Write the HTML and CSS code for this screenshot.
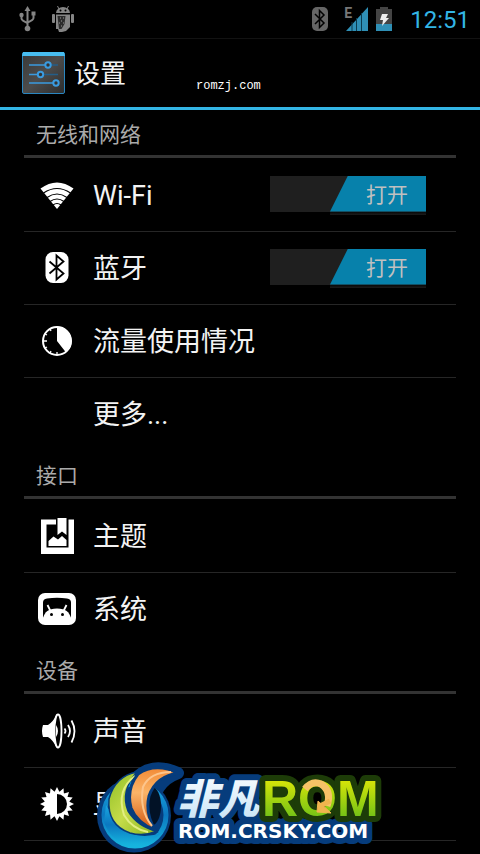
FILE: index.html
```html
<!DOCTYPE html>
<html lang="zh-CN">
<head>
  <meta charset="UTF-8">
  <meta name="viewport" content="width=device-width, initial-scale=1.0">
  <title>设置</title>
  <link rel="stylesheet" href="styles.css">
</head>
<body>
  <header class="status-bar">
    <svg class="status-icon" width="18" height="26" viewBox="0 0 18 26" fill="none" stroke="#858585" stroke-width="2">
      <path d="M8.500 22V4M2.500 9v3.500q0 2 6 4.500M14.500 8v4q0 2-6 4.500"/>
      <path d="M8.500 0l3 5h-6z" fill="#858585" stroke="none"/>
      <circle cx="8.500" cy="22.500" r="2.800" fill="#858585" stroke="none"/>
      <circle cx="2.500" cy="9" r="2.200" fill="#858585" stroke="none"/>
      <path d="M12.500 5.500h4v4h-4z" fill="#858585" stroke="none"/>
    </svg>
    <svg class="status-icon android-icon" width="24" height="28" viewBox="0 0 24 28" fill="#858585">
      <path d="M5 8a7 6 0 0 1 14 0z"/>
      <path d="M8 4L6.500 1M16 4l1.500-3" stroke="#858585" stroke-width="1"/>
      <rect x="1" y="9" width="3" height="9" rx="1"/>
      <rect x="20" y="9" width="3" height="9" rx="1"/>
      <path d="M5 9.500h14V22l-4 4-4 1H8l-1-3H5z"/>
      <path d="M6.500 11h8l-1 8-3 5H8z" fill="#2c2c2c"/>
      <path d="M9 13h1m2 0h1m-3 3h1m-3 2h1m3 0h1m-3 3h1" stroke="#999" stroke-width="1"/>
      <circle cx="9.500" cy="5.500" r="1" fill="#000"/>
      <circle cx="14.500" cy="5.500" r="1" fill="#000"/>
    </svg>
    <svg class="status-icon status-right" width="16" height="24" viewBox="0 0 16 24">
      <rect width="16" height="24" rx="5" fill="#666"/>
      <path d="M3 7l9 9-4.500 4.500v-17L12 8l-9 9" fill="none" stroke="#000" stroke-width="1.500"/>
    </svg>
    <span class="network">E</span>
    <svg class="status-icon" width="22" height="24" viewBox="0 0 22 24">
      <path d="M0 24L22 0v24z" fill="#2f8fb5"/>
      <path d="M6 15v9M10.500 11v13M15.500 6v18" stroke="#0b3a4d" stroke-width="1"/>
    </svg>
    <svg class="status-icon battery" width="16" height="24" viewBox="0 0 16 24">
      <path d="M0 2h4V0h8v2h4v22H0z" fill="#444"/>
      <path d="M0 17h16v7H0z" fill="#2f8fb5"/>
      <path d="M6 7h6l-2 4h3L6 19l1-6H4z" fill="#eee"/>
    </svg>
    <time class="clock">12:51</time>
  </header>

  <div class="action-bar">
    <svg width="43" height="42" viewBox="0 0 43 42">
      <defs>
        <linearGradient id="tile" x1="0" y1="0" x2="1" y2="1">
          <stop offset="0" stop-color="#383838"/>
          <stop offset=".5" stop-color="#4c4c4c"/>
          <stop offset="1" stop-color="#2c2c2c"/>
        </linearGradient>
      </defs>
      <rect x=".5" y=".5" width="42" height="41" rx="1.500" fill="url(#tile)" stroke="#2a86c0"/>
      <path d="M1 0h41l1 4H0z" fill="#48bdf0"/>
      <path d="M7 13h16M7 22.500h9M7 31h24" stroke="#3a9be0" stroke-width="1.500"/>
      <path d="M29 13h7M22 22.500h14" stroke="#245e88" stroke-width="1.500"/>
      <g fill="#333" stroke="#3a9be0" stroke-width="2">
        <circle cx="26" cy="13" r="2.700"/>
        <circle cx="18.500" cy="22.500" r="2.700"/>
        <circle cx="34" cy="31" r="2.700"/>
      </g>
    </svg>
    <h1>设置</h1>
    <span class="site-mark">romzj.com</span>
  </div>

  <main class="settings">
    <section>
      <h2>无线和网络</h2>
      <ul>
        <li class="row">
          <svg class="icon" viewBox="0 0 40 40">
            <path d="M20 34L3.500 13.500Q20 1.500 36.500 13.500z" fill="#fff"/>
            <g fill="none" stroke="#000" stroke-width="1.200">
              <path d="M6.500 18Q20 9 33.500 18M10 22.500Q20 15.500 30 22.500M13 26.500Q20 21.500 27 26.500M16 30Q20 27 24 30"/>
            </g>
          </svg>
          <a class="title" href="#wifi">Wi-Fi</a>
          <label class="switch">
            <input type="checkbox" role="switch" aria-label="Wi-Fi" checked>
            <span>打开</span>
          </label>
        </li>
        <li class="row">
          <svg class="icon" viewBox="0 0 40 40">
            <rect x="8.500" y="4" width="23" height="31" rx="7.500" fill="#fff"/>
            <path d="M12.500 13.500l14 12-7 6v-24l7 6-14 12" fill="none" stroke="#000" stroke-width="1.800"/>
          </svg>
          <a class="title" href="#bluetooth">蓝牙</a>
          <label class="switch">
            <input type="checkbox" role="switch" aria-label="蓝牙" checked>
            <span>打开</span>
          </label>
        </li>
        <li class="row">
          <svg class="icon" viewBox="0 0 40 40">
            <circle cx="20" cy="20" r="14" fill="none" stroke="#fff" stroke-width="2"/>
            <path d="M20 20V5.500a14.500 14.500 0 0 1 9 26z" fill="#fff"/>
            <path d="M6 20h4M20 34v-3M13 8l1 2M8 13l2 1M8 27l2-1M13 32l1-2" stroke="#fff" stroke-width="1.300"/>
          </svg>
          <a class="title" href="#data">流量使用情况</a>
        </li>
        <li class="row">
          <span class="icon"></span>
          <a class="title" href="#more">更多...</a>
        </li>
      </ul>
    </section>

    <section>
      <h2>接口</h2>
      <ul>
        <li class="row">
          <svg class="icon" viewBox="0 0 40 40" fill="#fff">
            <path d="M4 3.500h15v5H9.500v23h22v-28H37V38H4z"/>
            <path d="M20.500 2h9v17L25 15.500 20.500 19z"/>
            <path d="M11.500 30v-5l5-4.500 4.500 3 4-3.500 4.500 4V30z"/>
          </svg>
          <a class="title" href="#theme">主题</a>
        </li>
        <li class="row">
          <svg class="icon" viewBox="0 0 40 40">
            <rect x="1" y="4" width="38" height="32" rx="7" fill="#fff"/>
            <path d="M10 9.500q10-1.500 20 0 4 .5 4 4v15H6v-15q0-3.500 4-4z" fill="#000"/>
            <path d="M6 29c2-6 5-9.500 14-9.500s12 3.500 14 9.500v2H6z" fill="#fff"/>
            <path d="M13.500 22l-3-6M26.500 22l3-6" stroke="#fff" stroke-width="1.800"/>
            <circle cx="14.500" cy="25.500" r="1.500"/>
            <circle cx="25.500" cy="25.500" r="1.500"/>
          </svg>
          <a class="title" href="#system">系统</a>
        </li>
      </ul>
    </section>

    <section>
      <h2>设备</h2>
      <ul>
        <li class="row">
          <svg class="icon" viewBox="0 0 40 40">
            <path d="M6 14h5q5-3 9-11v34q-4-8-9-11H6q-2-6 0-12z" fill="#fff"/>
            <ellipse cx="21" cy="20" rx="3.500" ry="16.500" fill="#000" stroke="#fff" stroke-width="1.800"/>
            <path d="M19 14q4 6 0 12z" fill="#fff"/>
            <path d="M27.500 17.500q2 2.500 0 5M31 14q4 6 0 12M34.500 9.500q6 10.500 0 22" fill="none" stroke="#fff" stroke-width="1.800"/>
          </svg>
          <a class="title" href="#sound">声音</a>
        </li>
        <li class="row">
          <svg class="icon" viewBox="0 0 40 40">
            <g fill="#fff">
              <path id="rays" d="M20 3l3 6h-6zM20 37l3-6h-6zM3 20l6 3v-6zM37 20l-6 3v-6zM8 8l6.500 2-4.500 4.500zM32 8l-2 6.500-4.500-4.500zM8 32l2-6.500 4.500 4.500zM32 32l-6.500-2 4.500-4.500z"/>
              <use href="#rays" transform="rotate(22.500 20 20)"/>
              <circle cx="20" cy="20" r="12.500"/>
            </g>
            <path d="M20 10a10 10 0 0 1 0 20z"/>
          </svg>
          <a class="title" href="#display">显示</a>
        </li>
      </ul>
    </section>
  </main>

  <svg class="logo" viewBox="90 756 300 98" role="img" aria-label="非凡ROM">
    <defs>
      <linearGradient id="green" x1="0" y1="0" x2="1" y2="1">
        <stop offset="0" stop-color="#8fbf25"/>
        <stop offset=".5" stop-color="#c6dc4a"/>
        <stop offset="1" stop-color="#86b41c"/>
      </linearGradient>
      <linearGradient id="orange" x1="0" y1="0" x2="0" y2="1">
        <stop offset="0" stop-color="#f28a35"/>
        <stop offset=".4" stop-color="#fbb468"/>
        <stop offset="1" stop-color="#d2560f"/>
      </linearGradient>
      <linearGradient id="cyan" x1="0" y1="0" x2="0" y2="1">
        <stop offset="0" stop-color="#19a6e0"/>
        <stop offset=".5" stop-color="#0b78c0"/>
        <stop offset="1" stop-color="#16b4de"/>
      </linearGradient>
      <linearGradient id="lime" x1="0" y1="0" x2="0" y2="1">
        <stop offset="0" stop-color="#f0ee05"/>
        <stop offset="1" stop-color="#58b81a"/>
      </linearGradient>
      <linearGradient id="ice" x1="0" y1="0" x2="0" y2="1">
        <stop offset="0" stop-color="#fff"/>
        <stop offset="1" stop-color="#c3e2f6"/>
      </linearGradient>
    </defs>
    <circle cx="134" cy="815.500" r="37" fill="#063c7c"/>
    <path d="M178 773Q153 762 137 777T130 805L155 829Q145 785 178 773z" fill="#063c7c" stroke="#063c7c" stroke-width="12" stroke-linejoin="round"/>
    <circle cx="135" cy="815" r="31" fill="none" stroke="url(#cyan)" stroke-width="5"/>
    <path d="M104 822Q113 849 144 844Q155 841 161 833Q136 842 119 825L106 805z" fill="url(#cyan)"/>
    <ellipse cx="152" cy="806" rx="9" ry="19" fill="#021226"/>
    <path d="M137 772Q115 776 109 799Q107 825 130 833Q144 837 157 831Q138 827 128 811Q120 791 137 772z" fill="url(#green)" stroke="#063c7c" stroke-width="1.500"/>
    <path d="M135 776Q116 790 124 815Q132 829 148 832" fill="none" stroke="#e2ee82" stroke-width="2"/>
    <path d="M179 773Q155 762 138 774Q126 789 131 808Q137 823 155 830Q145 813 149 796Q156 776 179 773z" fill="url(#orange)" stroke="#063c7c" stroke-width="3"/>
    <path d="M171 772Q150 772 143 787Q139 810 152 826" fill="none" stroke="#fdc58c" stroke-width="2"/>
    <text class="logo-cn" x="177" y="814">非凡</text>
    <text class="logo-url" x="178" y="838">ROM.CRSKY.COM</text>
    <text class="logo-rom" x="262" y="816">ROM</text>
    <path d="M305 789Q312 780 321 784Q332 791 327 806" fill="none" stroke="#f7c266" stroke-width="7"/>
    <path d="M318 801l13 12-14-1z" fill="#f0b44e" stroke="#f0b44e" stroke-width="1"/>
    <path d="M320 806l10-5" stroke="#f0b44e" stroke-width="5"/>
  </svg>
</body>
</html>
```

FILE: styles.css
```css
* {
  box-sizing: border-box;
}

body {
  position: relative;
  margin: 0;
  min-height: 100vh;
  background: #000;
  color: #f3f3f3;
  font-family: Roboto, "Noto Sans CJK SC", sans-serif;
}

h1, h2, ul {
  margin: 0;
  padding: 0;
  font-weight: 400;
}

a {
  color: inherit;
  text-decoration: none;
}

/* status bar */
.status-bar {
  display: flex;
  align-items: center;
  height: 39px;
  padding: 0 10px 0 19px;
  border-bottom: 1px solid #121212;
}

.status-icon {
  flex: none;
}

.android-icon {
  margin-left: 14px;
}

.status-right {
  margin-left: auto;
}

.network {
  align-self: flex-start;
  margin: 6px -6px 0 16px;
  color: #777;
  font-size: 14px;
  font-weight: 700;
  line-height: 14px;
}

.battery {
  margin-left: 8px;
}

.clock {
  margin-left: 18px;
  padding-top: 2px;
  color: #33b5e5;
  font-size: 24px;
  line-height: 36px;
}

/* action bar */
.action-bar {
  position: relative;
  display: flex;
  align-items: center;
  gap: 9px;
  height: 71px;
  padding-left: 22px;
  border-bottom: 3px solid #33b5e5;
}

h1 {
  padding-top: 2px;
  font-size: 26px;
  line-height: 36px;
}

.site-mark {
  position: absolute;
  left: 196px;
  bottom: 13px;
  color: #fff;
  font: 12px/16px "Liberation Mono", monospace;
}

/* list */
.settings {
  padding: 0 24px;
}

h2 {
  height: 48px;
  margin-bottom: 1px;
  padding-left: 12px;
  border-bottom: 3px solid #333;
  color: #aaa;
  font-size: 21px;
  line-height: 50px;
}

.row {
  display: flex;
  align-items: center;
  height: 73px;
  padding: 0 30px 0 13px;
  border-bottom: 1px solid #262626;
}

section:not(:last-child) .row:last-child {
  border-bottom-color: transparent;
}

.icon {
  flex: none;
  width: 40px;
  height: 40px;
  margin-right: 16px;
}

.title {
  flex: 1;
  padding-top: 2px;
  font-size: 27px;
  line-height: 40px;
}

.switch {
  display: grid;
  grid-template-rows: 36px 3px;
  width: 156px;
  background: linear-gradient(#1f1f1f, #1f1f1f) no-repeat 0 0 / 100% 36px;
  cursor: pointer;
}

.switch input {
  grid-area: 1 / 1;
  justify-self: end;
  width: 96px;
  height: 36px;
  margin: 0;
  appearance: none;
  background: #0781ab;
  clip-path: polygon(18px 0, 100% 0, 100% 100%, 0 100%);
}

.switch span {
  grid-area: 1 / 1;
  justify-self: end;
  z-index: 1;
  width: 78px;
  color: #c0c0c0;
  font-size: 21px;
  line-height: 38px;
  text-align: center;
  pointer-events: none;
}

.switch::after {
  content: "";
  grid-area: 2 / 1;
  justify-self: end;
  width: 96px;
  background: linear-gradient(#080808, #1c1c1c);
}

/* logo over the list */
.logo {
  position: absolute;
  right: 0;
  bottom: 0;
  left: 0;
  width: 300px;
  height: 98px;
  margin: 0 auto;
}

.logo text {
  paint-order: stroke;
  stroke: #063c7c;
  stroke-width: 12px;
  stroke-linejoin: round;
}

.logo-cn {
  fill: url(#ice);
  font: italic 900 41px "Noto Sans CJK SC", sans-serif;
}

.logo .logo-rom {
  fill: url(#lime);
  stroke: #1d3c08;
  font: 700 50px "Liberation Sans", sans-serif;
}

.logo-url {
  fill: #fff;
  font: 700 20px "DejaVu Sans", sans-serif;
}
```
